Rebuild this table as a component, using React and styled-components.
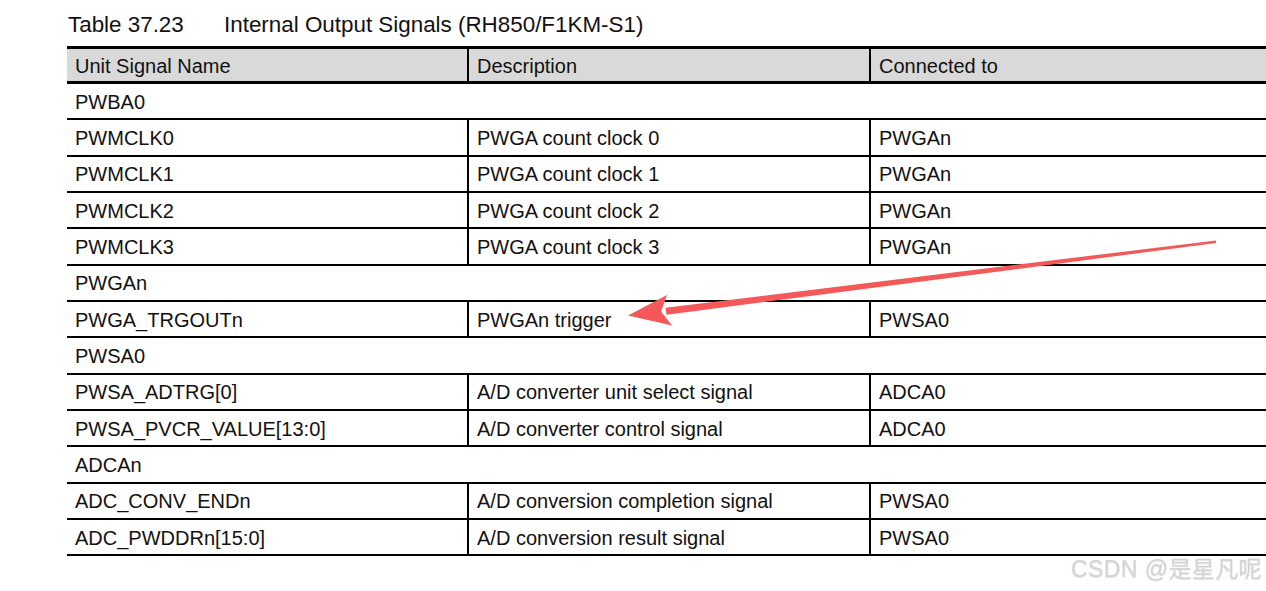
import React from "react";
import styled, { createGlobalStyle } from "styled-components";

const Global = createGlobalStyle`
  html, body { margin: 0; padding: 0; background: #fff; overflow: hidden; }
  body { font-family: "Liberation Sans", Arial, sans-serif; color: #111; }
`;

const Page = styled.div`
  position: relative;
  width: 1266px;
  height: 591px;
  padding-left: 67px;
  box-sizing: border-box;
  overflow: hidden;
`;

const Title = styled.div`
  display: flex;
  margin: 12px 0 8px 1px;
  height: 26px;
  line-height: 26px;
  font-size: 22.4px;
  color: #111;
`;

const TitleNum = styled.span`
  width: 156px;
`;

const Table = styled.div`
  width: 1220px;
  border-top: 3px solid #000;
`;

const Row = styled.div`
  display: grid;
  grid-template-columns: 402px 402px 1fr;
  height: ${(p) => p.$h}px;
  border-bottom: ${(p) => p.$bw}px solid #000;
  background: ${(p) => (p.$head ? "#d9d9d9" : "#fff")};
`;

const GroupRow = styled.div`
  height: 34.33px;
  border-bottom: 2px solid #000;
  display: flex;
  align-items: center;
  padding: 2px 0 0 8px;
  box-sizing: border-box;
  height: 36.33px;
  font-size: 20px;
`;

const Cell = styled.div`
  display: flex;
  align-items: center;
  padding: 2px 0 0 8px;
  font-size: 20px;
  border-right: ${(p) => (p.$last ? "none" : "2px solid #000")};
  white-space: nowrap;
`;

const Overlay = styled.svg`
  position: absolute;
  left: 0;
  top: 0;
  pointer-events: none;
`;

const Watermark = styled.div`
  position: absolute;
  right: 4px;
  bottom: 7px;
  font-family: "Liberation Sans", "Noto Sans CJK SC", sans-serif;
  font-size: 23px;
  color: #d4d4d4;
  text-shadow: 0 1px 1px #e3e3e3;
  letter-spacing: 0.4px;
`;

const rows = [
  { g: "PWBA0" },
  { c: ["PWMCLK0", "PWGA count clock 0", "PWGAn"] },
  { c: ["PWMCLK1", "PWGA count clock 1", "PWGAn"] },
  { c: ["PWMCLK2", "PWGA count clock 2", "PWGAn"] },
  { c: ["PWMCLK3", "PWGA count clock 3", "PWGAn"] },
  { g: "PWGAn" },
  { c: ["PWGA_TRGOUTn", "PWGAn trigger", "PWSA0"] },
  { g: "PWSA0" },
  { c: ["PWSA_ADTRG[0]", "A/D converter unit select signal", "ADCA0"] },
  { c: ["PWSA_PVCR_VALUE[13:0]", "A/D converter control signal", "ADCA0"] },
  { g: "ADCAn" },
  { c: ["ADC_CONV_ENDn", "A/D conversion completion signal", "PWSA0"] },
  { c: ["ADC_PWDDRn[15:0]", "A/D conversion result signal", "PWSA0"] },
];

export default function App() {
  return (
    <>
      <Global />
      <Page>
        <Title>
          <TitleNum>Table 37.23</TitleNum>
          <span>Internal Output Signals (RH850/F1KM-S1)</span>
        </Title>
        <Table>
          <Row $head $h={32} $bw={3}>
            <Cell>Unit Signal Name</Cell>
            <Cell>Description</Cell>
            <Cell $last>Connected to</Cell>
          </Row>
          {rows.map((r, i) =>
            r.g ? (
              <GroupRow key={i}>{r.g}</GroupRow>
            ) : (
              <Row key={i} $h={34.33} $bw={2}>
                <Cell>{r.c[0]}</Cell>
                <Cell>{r.c[1]}</Cell>
                <Cell $last>{r.c[2]}</Cell>
              </Row>
            )
          )}
        </Table>
        <Overlay width="1266" height="591" viewBox="0 0 1266 591">
          <polygon
            points="1216.2,243 1215.8,240.4 665.4,307.8 666.6,314.8"
            fill="#f45858"
          />
          <polygon
            points="628,315.5 667,295 661,311.5 672,325.5"
            fill="#f45858"
          />
        </Overlay>
        <Watermark>CSDN @是星凡呢</Watermark>
      </Page>
    </>
  );
}
